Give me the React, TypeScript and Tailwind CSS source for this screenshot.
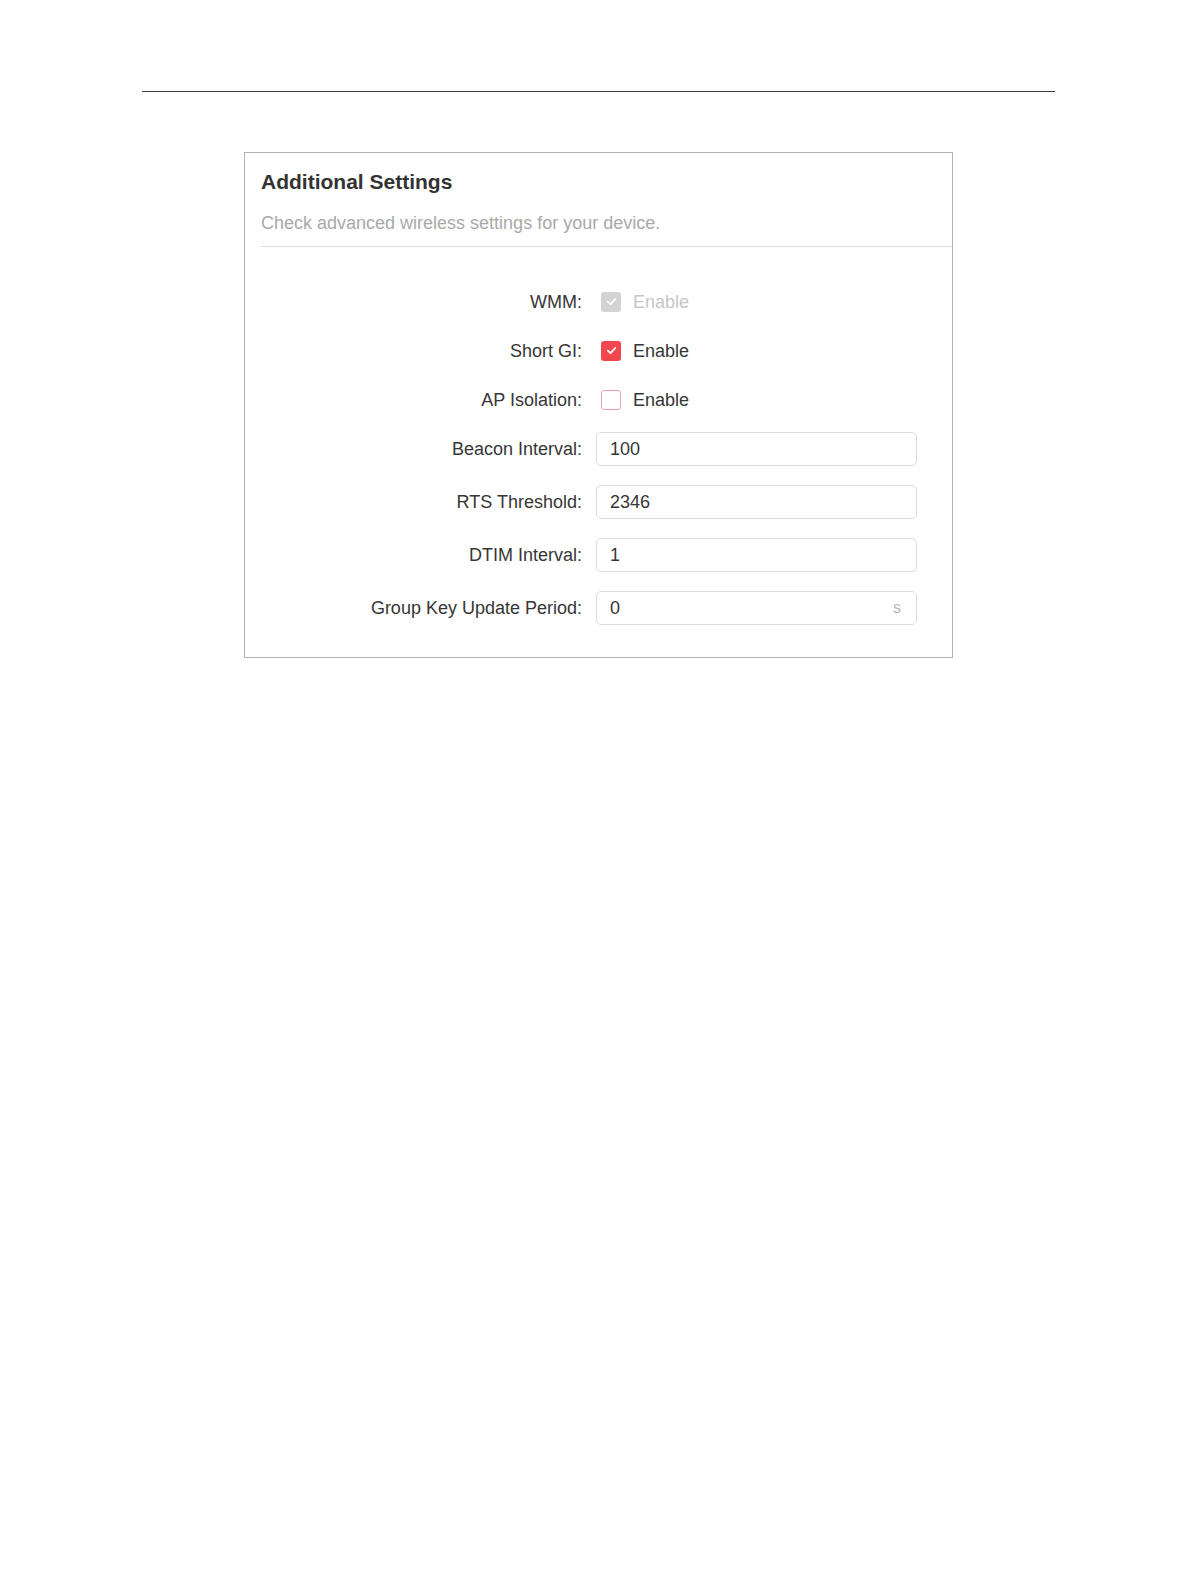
import React from 'react';

const font = { fontFamily: '"Liberation Sans", Arial, sans-serif' };

type CheckState = 'disabled' | 'checked' | 'unchecked';

const CheckMark: React.FC = () => (
  <svg className="w-[13px] h-[13px]" viewBox="0 0 16 16" fill="none">
    <path d="M3.5 8.2 L6.8 11.2 L12.5 5" stroke="white" strokeWidth={2.2} strokeLinecap="round" strokeLinejoin="round" />
  </svg>
);

const CheckRow: React.FC<{ label: string; state: CheckState }> = ({ label, state }) => {
  const box =
    state === 'disabled'
      ? 'bg-[#d3d3d3]'
      : state === 'checked'
      ? 'bg-[#f2474e]'
      : 'border-[1.5px] border-[#e8a4aa] bg-white';

  return (
    <div className="flex items-center h-[49px]">
      <div className="w-[337px] text-right text-[18px] text-[#363636] leading-6">{label}</div>
      <div className="ml-[19px] flex items-center">
        <span className={`w-[20px] h-[20px] rounded-[3px] flex items-center justify-center ${box}`}>
          {state !== 'unchecked' && <CheckMark />}
        </span>
        <span
          className={`ml-[12px] text-[18px] leading-6 ${state === 'disabled' ? 'text-[#c6c6c6]' : 'text-[#363636]'}`}
        >
          Enable
        </span>
      </div>
    </div>
  );
};

const InputRow: React.FC<{ label: string; value: string; unit?: string }> = ({ label, value, unit }) => (
  <div className="flex items-center h-[34px]">
    <div className="w-[337px] text-right text-[18px] text-[#363636] leading-6">{label}</div>
    <div className="ml-[14px] w-[321px] h-[34px] border border-[#dcdcdc] rounded-[5px] flex items-center pl-[13px] pr-[15px]">
      <span className="flex-1 text-[18px] text-[#363636] leading-6">{value}</span>
      {unit && <span className="text-[16px] text-[#b8b8b8] leading-6">{unit}</span>}
    </div>
  </div>
);

export default function App() {
  return (
    <div className="min-h-[1582px] w-[1196px] bg-white" style={font}>
      {/* Page rule */}
      <div className="pt-[91px] pl-[142px]">
        <div className="w-[913px] h-px bg-[#3f3f3f]" />
      </div>

      {/* Additional Settings card */}
      <div className="mt-[60px] ml-[244px] w-[709px] h-[506px] border border-[#b3b3b3] bg-white">
        <div className="pl-4 pt-[17px]">
          <h2 className="text-[21px] font-bold text-[#333] leading-6">Additional Settings</h2>
          <p className="mt-[17px] text-[18px] text-[#a9a9a9] leading-6">
            Check advanced wireless settings for your device.
          </p>
          <div className="mt-[11px] h-px bg-[#dedede]" />
        </div>

        <div className="pt-[30px] flex flex-col">
          <CheckRow label="WMM:" state="disabled" />
          <CheckRow label="Short GI:" state="checked" />
          <CheckRow label="AP Isolation:" state="unchecked" />
          <div className="mt-[8px] flex flex-col gap-[19px]">
            <InputRow label="Beacon Interval:" value="100" />
            <InputRow label="RTS Threshold:" value="2346" />
            <InputRow label="DTIM Interval:" value="1" />
            <InputRow label="Group Key Update Period:" value="0" unit="s" />
          </div>
        </div>
      </div>
    </div>
  );
}
